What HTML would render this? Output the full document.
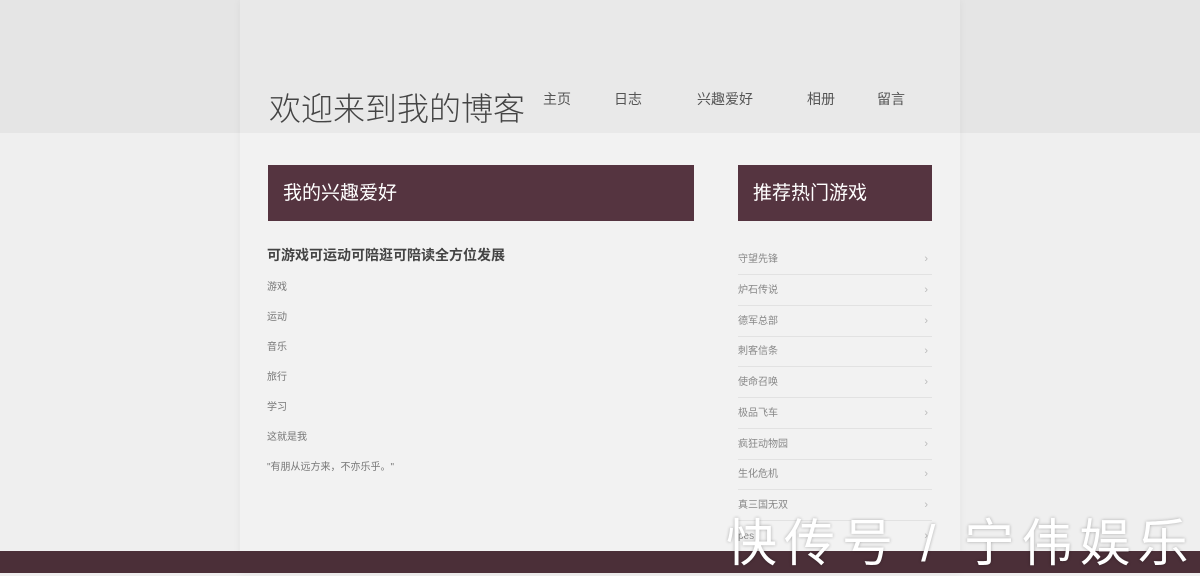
<!DOCTYPE html>
<html><head><meta charset="utf-8"><style>
*{margin:0;padding:0;box-sizing:border-box}
body{width:1200px;height:573px;overflow:hidden;background:#efefef;font-family:"Liberation Sans","Noto Sans CJK SC",sans-serif;position:relative}
.top{position:absolute;left:0;top:0;width:1200px;height:133px;background:#e5e5e5}
.col{position:absolute;left:240px;top:0;width:720px;height:573px;background:#f2f2f2;box-shadow:0 0 8px rgba(0,0,0,.05)}
.coltop{position:absolute;left:240px;top:0;width:720px;height:133px;background:#e9e9e9}
.t{position:absolute;white-space:nowrap}
.title{left:269px;top:84px;font-size:32px;color:#444;font-weight:300}
.nav{top:89px;font-size:14px;color:#555}
.box{position:absolute;background:#553440;color:#fff;font-size:19px;padding-left:15px;line-height:58px}
.small{font-size:10px;color:#777;left:267px}
.li{position:absolute;left:738px;width:194px;height:31px;border-bottom:1px solid #e2e2e2;font-size:10px;color:#888;line-height:31px}
.li span{position:absolute;right:4px;color:#bbb;font-size:11px}
.foot{position:absolute;left:0;top:551px;width:1200px;height:22px;background:#4b2f38}
.wm{position:absolute;left:726px;top:502px;font-size:51px;color:#fff;letter-spacing:7px;text-shadow:0 0 3px rgba(0,0,0,.3)}
</style></head><body>
<div class="top"></div><div class="col"></div><div class="coltop"></div>
<div class="t title">欢迎来到我的博客</div>
<div class="t nav" style="left:543px">主页</div>
<div class="t nav" style="left:614px">日志</div>
<div class="t nav" style="left:697px">兴趣爱好</div>
<div class="t nav" style="left:807px">相册</div>
<div class="t nav" style="left:877px">留言</div>
<div class="box" style="left:268px;top:165px;width:426px;height:56px">我的兴趣爱好</div>
<div class="box" style="left:738px;top:165px;width:194px;height:56px">推荐热门游戏</div>
<div class="t" style="left:267px;top:245px;font-size:14px;font-weight:bold;color:#444">可游戏可运动可陪逛可陪读全方位发展</div>
<div class="t small" style="top:278px">游戏</div>
<div class="t small" style="top:308px">运动</div>
<div class="t small" style="top:338px">音乐</div>
<div class="t small" style="top:368px">旅行</div>
<div class="t small" style="top:398px">学习</div>
<div class="t small" style="top:428px">这就是我</div>
<div class="t small" style="top:458px">"有朋从远方来，不亦乐乎。"</div>
<div class="li" style="top:244px">守望先锋<span>›</span></div>
<div class="li" style="top:275px">炉石传说<span>›</span></div>
<div class="li" style="top:306px">德军总部<span>›</span></div>
<div class="li" style="top:336px">刺客信条<span>›</span></div>
<div class="li" style="top:367px">使命召唤<span>›</span></div>
<div class="li" style="top:398px">极品飞车<span>›</span></div>
<div class="li" style="top:429px">疯狂动物园<span>›</span></div>
<div class="li" style="top:459px">生化危机<span>›</span></div>
<div class="li" style="top:490px">真三国无双<span>›</span></div>
<div class="li" style="top:521px;border:none">pes<span>›</span></div>
<div class="foot"></div>
<div class="wm">快传号 / 宁伟娱乐</div>
</body></html>
